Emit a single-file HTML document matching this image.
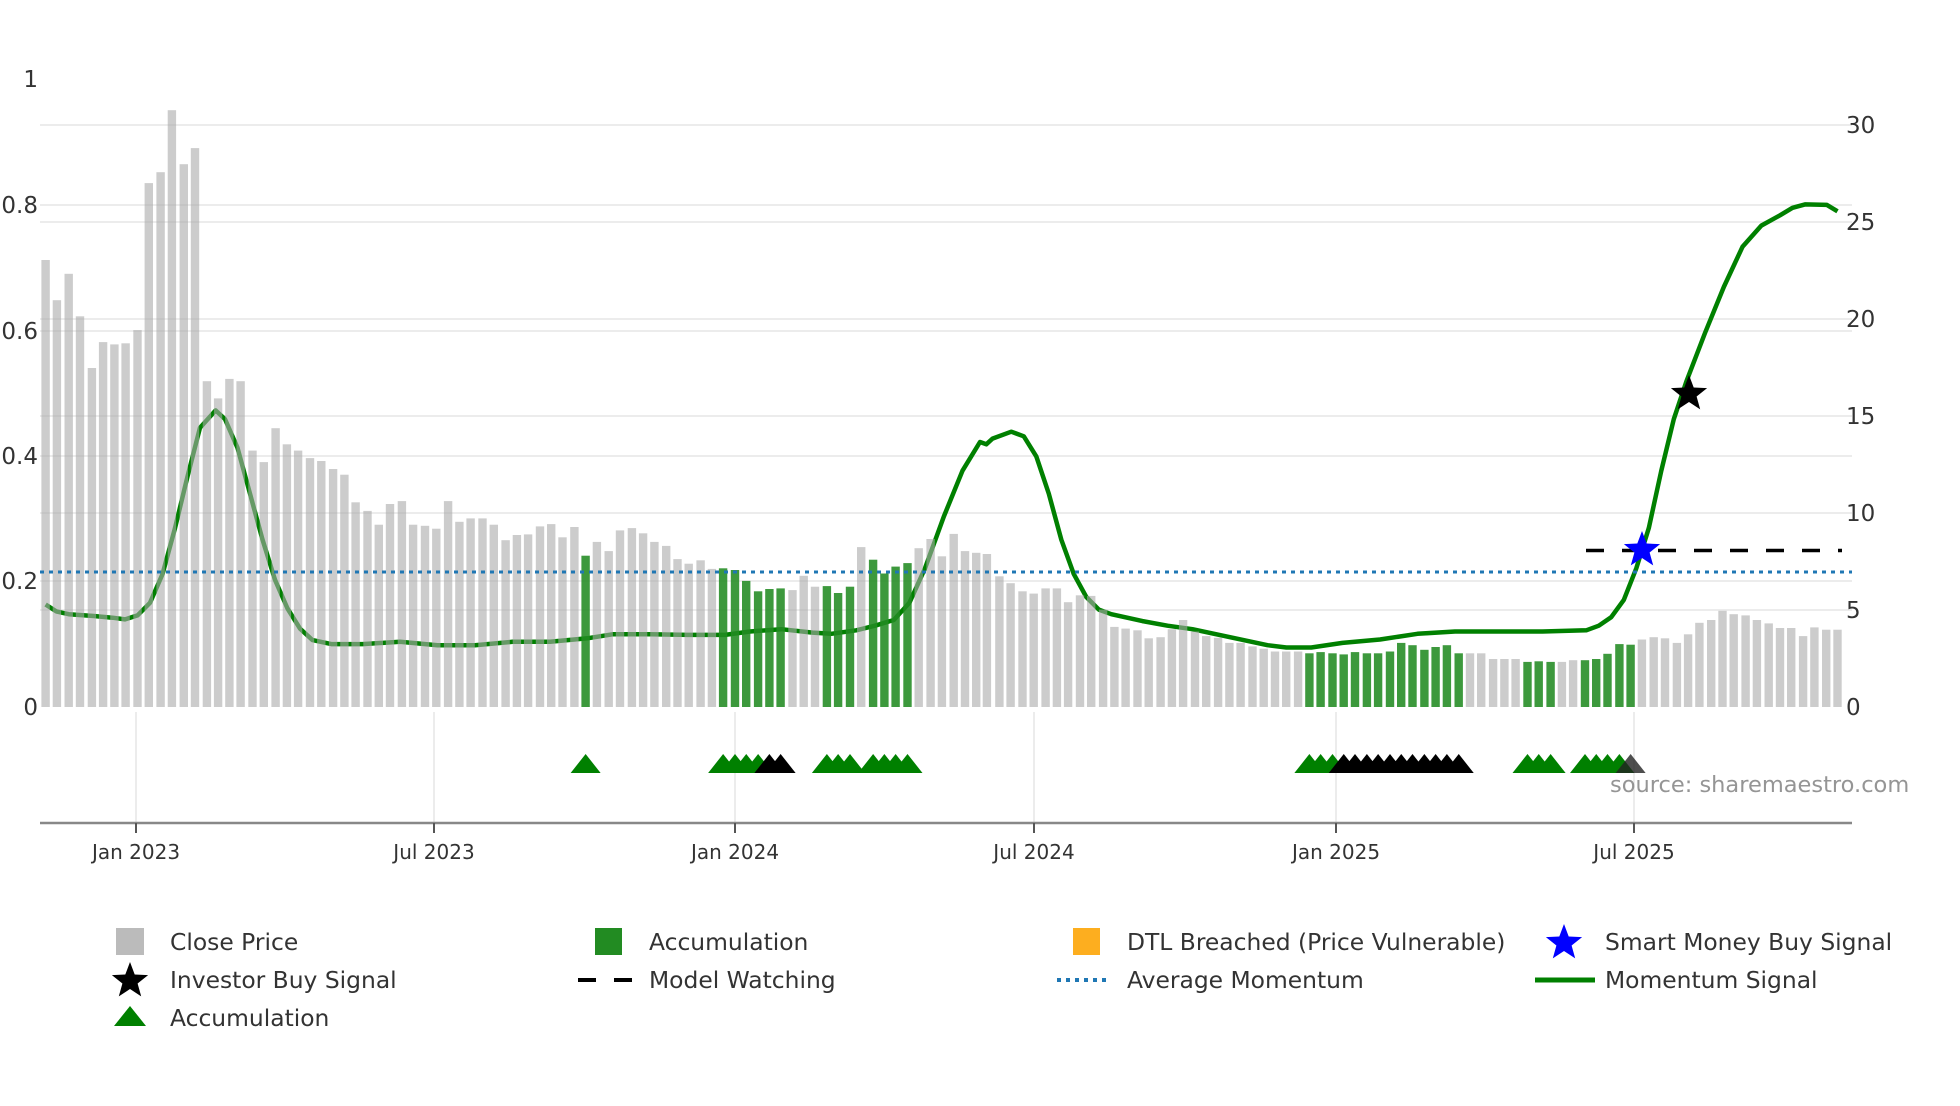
<!DOCTYPE html>
<html><head><meta charset="utf-8"><style>
html,body{margin:0;padding:0;background:#fff;}
body{width:1960px;height:1102px;overflow:hidden;font-family:"DejaVu Sans","Liberation Sans",sans-serif;}
svg text{font-family:"DejaVu Sans","Liberation Sans",sans-serif;}
</style></head><body>
<svg id="s" width="1960" height="1102" xmlns="http://www.w3.org/2000/svg">
<g id="grid" stroke="#ececec" stroke-width="2">
<line x1="40" x2="1852" y1="205" y2="205"/><line x1="40" x2="1852" y1="331" y2="331"/><line x1="40" x2="1852" y1="456" y2="456"/><line x1="40" x2="1852" y1="581" y2="581"/>
<line x1="40" x2="1852" y1="125" y2="125"/><line x1="40" x2="1852" y1="222" y2="222"/><line x1="40" x2="1852" y1="319" y2="319"/><line x1="40" x2="1852" y1="416" y2="416"/><line x1="40" x2="1852" y1="513" y2="513"/><line x1="40" x2="1852" y1="610" y2="610"/>
<line x1="136" x2="136" y1="712" y2="823"/><line x1="434" x2="434" y1="712" y2="823"/><line x1="735" x2="735" y1="712" y2="823"/><line x1="1034" x2="1034" y1="712" y2="823"/><line x1="1336" x2="1336" y1="712" y2="823"/><line x1="1634" x2="1634" y1="712" y2="823"/>
</g>
<g id="line"></g>
<g id="bars"></g>
<g id="over"></g>
<g font-size="23" fill="#333" text-anchor="end">
<text x="38" y="87">1</text><text x="38" y="213">0.8</text><text x="38" y="339">0.6</text><text x="38" y="464">0.4</text><text x="38" y="589">0.2</text><text x="38" y="715">0</text>
</g>
<g font-size="23" fill="#333">
<text x="1846" y="133">30</text><text x="1846" y="230">25</text><text x="1846" y="327">20</text><text x="1846" y="424">15</text><text x="1846" y="521">10</text><text x="1846" y="618">5</text><text x="1846" y="715">0</text>
</g>
<line x1="40" x2="1852" y1="823" y2="823" stroke="#888" stroke-width="2.5"/>
<g stroke="#555" stroke-width="2">
<line x1="136" x2="136" y1="823" y2="833"/><line x1="434" x2="434" y1="823" y2="833"/><line x1="735" x2="735" y1="823" y2="833"/><line x1="1034" x2="1034" y1="823" y2="833"/><line x1="1336" x2="1336" y1="823" y2="833"/><line x1="1634" x2="1634" y1="823" y2="833"/>
</g>
<g font-size="20" fill="#333" text-anchor="middle">
<text x="136" y="859">Jan 2023</text><text x="434" y="859">Jul 2023</text><text x="735" y="859">Jan 2024</text><text x="1034" y="859">Jul 2024</text><text x="1336" y="859">Jan 2025</text><text x="1634" y="859">Jul 2025</text>
</g>
<text x="1610" y="792" font-size="22.5" fill="#8a8a8a" opacity="0.9">source: sharemaestro.com</text>
<g font-size="23.4" fill="#333">
<rect x="116" y="928" width="28" height="27" fill="#bbbbbb"/><text x="170" y="950">Close Price</text>
<rect x="595" y="928" width="27" height="27" fill="#228b22"/><text x="649" y="950">Accumulation</text>
<rect x="1073" y="928" width="27" height="27" fill="#fdae1f"/><text x="1127" y="950">DTL Breached (Price Vulnerable)</text>
<g id="lstar1"></g><text x="1605" y="950">Smart Money Buy Signal</text>
<g id="lstar2"></g><text x="170" y="988">Investor Buy Signal</text>
<line x1="578" x2="632" y1="980" y2="980" stroke="#000" stroke-width="4" stroke-dasharray="18,18"/><text x="649" y="988">Model Watching</text>
<line x1="1057" x2="1110" y1="980" y2="980" stroke="#1f77b4" stroke-width="4" stroke-dasharray="4,5"/><text x="1127" y="988">Average Momentum</text>
<line x1="1535" x2="1595" y1="980" y2="980" stroke="#008000" stroke-width="5"/><text x="1605" y="988">Momentum Signal</text>
<polygon points="114,1026 130,1006 146,1026" fill="#008000"/><text x="170" y="1026">Accumulation</text>
</g>
</svg>
<script>
var NS="http://www.w3.org/2000/svg";
function el(p,t,a){var e=document.createElementNS(NS,t);for(var k in a)e.setAttribute(k,a[k]);p.appendChild(e);return e;}
function star(cx,cy,R){var r=R*0.42,pts=[];for(var i=0;i<10;i++){var ang=-Math.PI/2+i*Math.PI/5,rr=i%2?r:R;pts.push((cx+rr*Math.cos(ang)).toFixed(1)+","+(cy+rr*Math.sin(ang)).toFixed(1));}return pts.join(" ");}
var z1=[[73,453],[91,523],[110,477],[128,551],[147,641],[165,596],[183,600],[201,598],[220,575],[238,319],[257,300],[275,192],[294,286],[312,258],[331,664],[349,694],[367,660],[385,664],[404,785],[422,805],[441,746],[459,774],[477,785],[496,798],[514,803],[533,817],[551,827],[569,875],[588,890],[606,914],[624,878],[643,873],[661,914],[680,916],[698,921],[717,873],[735,909],[753,903],[772,903],[790,914],[809,941],[827,932],[845,931],[864,917],[882,913],[900,936],[919,918],[937,968,1],[955,944],[974,960],[992,924],[1011,920],[1029,929],[1047,944],[1066,951],[1084,974],[1102,982],[1121,976],[1139,991],[1157,990,1],[1176,993,1],[1194,1012,1],[1213,1030,1],[1231,1026,1],[1249,1025,1],[1268,1028],[1286,1003],[1304,1022],[1323,1021,1],[1341,1033,1],[1360,1022,1],[1378,953],[1397,975,1],[1415,999,1],[1433,987,1],[1452,981,1],[1470,955],[1489,939],[1507,969],[1526,930],[1544,960],[1562,963]];
var z2=[[11,965],[31,1004],[49,1016],[68,1030],[86,1034],[105,1025],[123,1025],[141,1049],[160,1037],[178,1038],[197,1062],[215,1092],[233,1095],[252,1098],[270,1112],[289,1110],[307,1096],[325,1080],[344,1100],[362,1108],[381,1111],[399,1120],[417,1120],[436,1126],[454,1130],[472,1135],[490,1135],[509,1135],[527,1138,1],[545,1136,1],[564,1138,1],[582,1140,1],[600,1136,1],[619,1138,1],[637,1138,1],[656,1135,1],[674,1120,1],[692,1124,1],[711,1132,1],[729,1127,1],[747,1124,1],[766,1138,1],[784,1138],[802,1138],[821,1148],[839,1148],[857,1148],[876,1153,1],[894,1152,1],[913,1153,1],[931,1153],[949,1150],[968,1150,1],[986,1148,1],[1004,1139,1],[1023,1122,1],[1041,1123,1],[1059,1114],[1078,1110],[1096,1112],[1115,1120],[1133,1105],[1151,1085],[1170,1080],[1188,1064],[1206,1070],[1225,1072],[1243,1080],[1262,1086],[1280,1094],[1298,1094],[1317,1108],[1335,1093],[1354,1097],[1372,1097]];
var B=document.getElementById("bars");
function addBar(x,top,g){el(B,"rect",{x:(x-4.2).toFixed(1),y:top.toFixed(1),width:8.4,height:(707-top).toFixed(1),fill:g?"rgba(34,139,34,0.88)":"rgba(170,170,170,0.6)"});}
z1.forEach(function(b){addBar(b[0]/1.6,b[1]/1.742,b[2]);});
z2.forEach(function(b){addBar(980+b[0]/1.6,b[1]/1.742,b[2]);});
var l1=[[73,1053],[90,1065],[110,1070],[150,1073],[180,1076],[200,1079],[220,1072],[240,1050],[260,1000],[280,920],[300,830],[320,745],[345,715],[360,730],[380,780],[400,860],[420,940],[440,1010],[460,1060],[480,1095],[500,1115],[530,1122],[580,1122],[640,1118],[700,1124],[760,1124],[820,1118],[880,1118],[940,1112],[980,1105],[1040,1105],[1100,1106],[1160,1106],[1200,1100],[1250,1096],[1300,1102],[1330,1104],[1370,1098],[1400,1090],[1430,1080],[1455,1050],[1480,990],[1510,900],[1540,820],[1568,770]];
var l2=[[10,774],[20,764],[50,752],[70,760],[90,795],[110,860],[130,940],[150,1000],[170,1040],[190,1062],[210,1070],[260,1082],[300,1090],[340,1096],[400,1110],[460,1124],[490,1128],[530,1128],[580,1120],[640,1114],[700,1104],[760,1100],[800,1100],[900,1100],[970,1098],[990,1090],[1010,1075],[1030,1045],[1050,990],[1070,920],[1090,820],[1110,730],[1130,665],[1160,580],[1190,500],[1220,430],[1250,393],[1280,375],[1300,362],[1320,356],[1355,357],[1372,368]];
var pts=l1.map(function(p){return [p[0]/1.6,p[1]/1.742];}).concat(l2.map(function(p){return [980+p[0]/1.6,p[1]/1.742];}));
var d="M"+pts.map(function(p){return p[0].toFixed(1)+","+p[1].toFixed(1);}).join(" L");
el(document.getElementById("line"),"path",{d:d,fill:"none",stroke:"#008000","stroke-width":4.5,"stroke-linejoin":"round"});
var O=document.getElementById("over");
el(O,"line",{x1:40,x2:1852,y1:572,y2:572,stroke:"#1f77b4","stroke-width":3,"stroke-dasharray":"4,5"});
el(O,"line",{x1:1586,x2:1842,y1:550.5,y2:550.5,stroke:"#000","stroke-width":3.5,"stroke-dasharray":"18,18"});
function tri(x,c,op){el(O,"polygon",{points:(x-15)+",773 "+x+",754 "+(x+15)+",773",fill:c,opacity:op||1});}
[937,1157,1176,1194,1213,1323,1341,1360,1397,1415,1433,1452].forEach(function(x){tri(x/1.6,"#008000");});
[1231,1249].forEach(function(x){tri(x/1.6,"#000");});
[527,545,564,876,894,913,968,986,1004,1023].forEach(function(x){tri(980+x/1.6,"#008000");});
[582,600,619,637,656,674,692,711,729,747,766].forEach(function(x){tri(980+x/1.6,"#000");});
tri(980+1041/1.6,"#222",0.8);
el(O,"polygon",{points:star(1642,550,19),fill:"#0000ff"});
el(O,"polygon",{points:star(1689,394,19),fill:"#000"});
el(document.getElementById("lstar1"),"polygon",{points:star(1564,943,19),fill:"#0000ff"});
el(document.getElementById("lstar2"),"polygon",{points:star(130,981,19),fill:"#000"});
</script>
</body></html>
